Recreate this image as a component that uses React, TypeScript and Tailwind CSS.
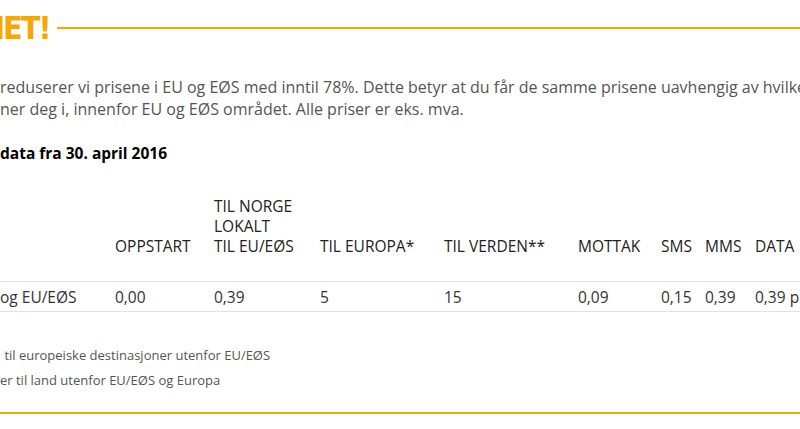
import { type FC } from 'react';

const headers = [
  { label: ['OPPSTART'], w: 'w-[99px]' },
  { label: ['TIL NORGE', 'LOKALT', 'TIL EU/EØS'], w: 'w-[106px]' },
  { label: ['TIL EUROPA*'], w: 'w-[124px]' },
  { label: ['TIL VERDEN**'], w: 'w-[134px]' },
  { label: ['MOTTAK'], w: 'w-[83px]' },
  { label: ['SMS'], w: 'w-[44px]' },
  { label: ['MMS'], w: 'w-[50px]' },
  { label: ['DATA'], w: 'w-[120px]' },
];

const values = ['0,00', '0,39', '5', '15', '0,09', '0,15', '0,39', '0,39 pr MB'];

const App: FC = () => {
  return (
    <div
      className="w-[800px] h-[429px] overflow-hidden bg-white text-[#555]"
      style={{ fontFamily: '"Open Sans", "Noto Sans", sans-serif' }}
    >
      {/* heading with rule */}
      <div className="flex items-center h-[54px] pt-[1px]">
        <h2
          className="-ml-[19px] text-[32px] font-bold leading-none tracking-[-2px] text-[#f5a800] whitespace-nowrap"
          style={{ fontFamily: '"Liberation Sans Narrow", "DejaVu Sans Condensed", "Roboto", sans-serif' }}
        >
          NET!
        </h2>
        <div className="ml-[7px] flex-1 h-[2px] bg-[#f5a800]" />
      </div>

      <div className="mt-[22px] text-[16px] leading-[22px] whitespace-nowrap">
        <p>reduserer vi prisene i EU og EØS med inntil 78%. Dette betyr at du får de samme prisene uavhengig av hvilket land</p>
        <p>ner deg i, innenfor EU og EØS området. Alle priser er eks. mva.</p>
      </div>

      <p className="mt-[22px] text-[15.5px] leading-[22px] font-bold text-black whitespace-nowrap">
        data fra 30. april 2016
      </p>

      {/* price table */}
      <div className="mt-[32px] w-max text-[15.5px] leading-[20px] whitespace-nowrap">
        <div className="flex items-end pb-[25px] border-b border-[#e2e2e2] text-[#222]">
          <div className="w-[115px] shrink-0" />
          {headers.map((h) => (
            <div key={h.label.join()} className={`${h.w} shrink-0`}>
              {h.label.map((l) => (
                <div key={l}>{l}</div>
              ))}
            </div>
          ))}
        </div>
        <div className="flex items-center h-[30px] border-b border-[#e2e2e2] text-[#333]">
          <div className="w-[115px] shrink-0">og EU/EØS</div>
          {values.map((v, i) => (
            <div key={i} className={`${headers[i].w} shrink-0`}>
              {v}
            </div>
          ))}
        </div>
      </div>

      <div className="mt-[31px] text-[13px] leading-[25px] text-[#555] whitespace-nowrap">
        <p className="pl-[1px]">&nbsp;til europeiske destinasjoner utenfor EU/EØS</p>
        <p>er til land utenfor EU/EØS og Europa</p>
      </div>

      <div className="mt-[19px] h-[2px] bg-[#f5a800]" />
    </div>
  );
};

export default App;
